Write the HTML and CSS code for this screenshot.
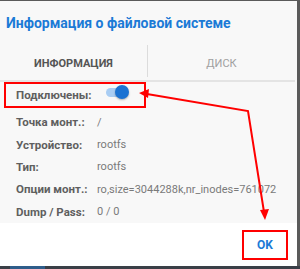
FILE: index.html
```html
<!DOCTYPE html>
<html>
<head>
  <title>Информация о файловой системе</title>
  <link rel="stylesheet" href="styles.css">
</head>
<body>
  <div id="screen">
    <div id="dialog">
      <div class="dialog-title">Информация о файловой системе</div>
      <div class="tabs">
        <div class="tab active">Информация</div>
        <div class="tab-sep"></div>
        <div class="tab">Диск</div>
      </div>
      <div class="info">
        <div class="row row-switch mark">
          <span class="label">Подключены:</span>
          <span class="switch"><span class="thumb"></span></span>
        </div>
        <div class="row"><span class="label">Точка монт.:</span><span class="value">/</span></div>
        <div class="row"><span class="label">Устройство:</span><span class="value">rootfs</span></div>
        <div class="row"><span class="label">Тип:</span><span class="value">rootfs</span></div>
        <div class="row"><span class="label">Опции монт.:</span><span class="value">ro,size=3044288k,nr_inodes=761072</span></div>
        <div class="row"><span class="label">Dump / Pass:</span><span class="value">0 / 0</span></div>
      </div>
      <div class="actions">
        <button class="ok-button mark">OK</button>
      </div>
    </div>
    <div class="taskbar"><span class="task"></span></div>

    <!-- annotation arrows -->
    <svg class="arrows" width="300" height="269" viewBox="0 0 300 269">
      <polyline points="147,94 248,111 264,212" fill="none" stroke="#f00" stroke-width="2"/>
      <polygon points="139,93 149,89 148,98" fill="#f00"/>
      <polygon points="265,220 260,210 269,209" fill="#f00"/>
    </svg>
  </div>
</body>
</html>
```

FILE: styles.css
```css
body {
  margin: 0;
  font-family: Roboto, "Noto Sans", Arial, sans-serif;
  background: #5a5a5a;
}

#screen {
  width: 300px;
  height: 269px;
  position: relative;
  overflow: hidden;
  background: #5a5a5a;
}

#dialog {
  width: 297px;
  height: 265px;
  margin-top: 1px;
  background: #f8f8f8;
  display: flex;
  flex-direction: column;
}

.dialog-title {
  height: 43px;
  padding-left: 6px;
  display: flex;
  align-items: center;
  color: #1b7ad6;
  font-size: 14px;
  font-weight: bold;
}

.tabs {
  height: 36px;
  display: flex;
  align-items: center;
  border-bottom: 2px solid #e4e4e4;
  margin-right: 2px;
}

.tab {
  flex: 1;
  text-align: center;
  text-transform: uppercase;
  font-size: 11px;
  color: #a0a0a0;
  padding-top: 2px;
}

.tab.active {
  color: #555;
  font-weight: bold;
}

.tab-sep {
  width: 1px;
  height: 32px;
  align-self: flex-start;
  margin-top: 1px;
  background: #dcdcdc;
}

.info {
  height: 141px;
  display: flex;
  flex-direction: column;
}

.row {
  height: 22.5px;
  display: flex;
  align-items: center;
  padding-left: 16px;
  font-size: 11px;
}

.row-switch {
  height: 26px;
  width: 142px;
  margin-left: 4px;
  padding-left: 10px;
  margin-bottom: 3px;
  box-sizing: border-box;
}

.mark {
  border: 2px solid #f00;
}

.label {
  width: 81px;
  color: #5f5f5f;
  font-weight: bold;
  font-size: 11.5px;
}

.value {
  color: #7a7a7a;
}

.switch {
  position: relative;
  width: 19px;
  height: 9px;
  margin-left: 9px;
  margin-top: -5px;
  border-radius: 5px;
  background: #a9cdf3;
}

.thumb {
  position: absolute;
  right: -4px;
  top: -3px;
  width: 14px;
  height: 14px;
  border-radius: 50%;
  background: #1b72d2;
  box-shadow: 0 1px 2px rgba(0,0,0,0.3);
}

.actions {
  flex: 1;
  background: #fff;
  display: flex;
  justify-content: flex-end;
  align-items: center;
  padding-right: 9px;
}

.ok-button {
  width: 46px;
  height: 30px;
  margin-top: 1px;
  background: #fff;
  color: #1b7ad6;
  font-family: Roboto, Arial, sans-serif;
  font-size: 12px;
  font-weight: bold;
  padding: 0;
}

.taskbar {
  height: 3px;
  background: #3a3f47;
}

.task {
  display: block;
  width: 35px;
  height: 3px;
  margin-left: 10px;
  background: #2f5d8a;
}

.arrows {
  position: absolute;
  left: 0;
  top: 0;
}
```
